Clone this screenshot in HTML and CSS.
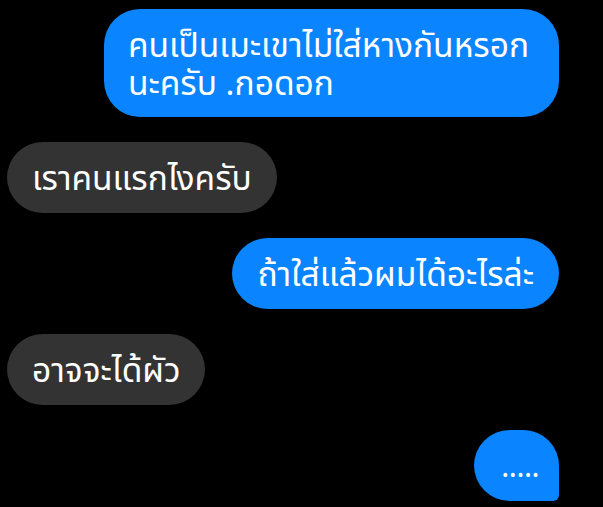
FILE: index.html
```html
<!DOCTYPE html>
<html lang="th">
<head>
<meta charset="utf-8">
<link rel="stylesheet" href="styles.css">
</head>
<body>
<div class="chat">
  <div class="row out"><div class="bubble blue b1">คนเป็นเมะเขาไม่ใส่หางกันหรอก<br>นะครับ .กอดอก</div></div>
  <div class="row in"><div class="bubble gray">เราคนแรกไงครับ</div></div>
  <div class="row out"><div class="bubble blue">ถ้าใส่แล้วผมได้อะไรล่ะ</div></div>
  <div class="row in"><div class="bubble gray">อาจจะได้ผัว</div></div>
  <div class="row out"><div class="bubble blue last">.....</div></div>
</div>
</body>
</html>
```
FILE: styles.css
```css
html, body {
  margin: 0;
  padding: 0;
  background: #000;
}
body {
  width: 603px;
  height: 507px;
  overflow: hidden;
  font-family: "Noto Sans", "Noto Sans Thai", "DejaVu Sans", sans-serif;
}
.chat {
  display: flex;
  flex-direction: column;
  gap: 25px;
  padding: 9px 44px 0 7px;
}
.row {
  display: flex;
}
.row.out {
  justify-content: flex-end;
}
.row.in {
  justify-content: flex-start;
}
.bubble {
  color: #fff;
  font-size: 33.5px;
  line-height: 39px;
  padding: 16px 25px;
  border-radius: 36px;
  white-space: nowrap;
}
.blue {
  background: #0a84ff;
}
.gray {
  background: #333333;
}
.b1 {
  padding: 16px 30px 16px 24px;
  line-height: 38px;
}
.last {
  border-bottom-right-radius: 6px;
  padding: 16px 20px 16px 27px;
  letter-spacing: -0.5px;
  font-size: 30px;
}
```
